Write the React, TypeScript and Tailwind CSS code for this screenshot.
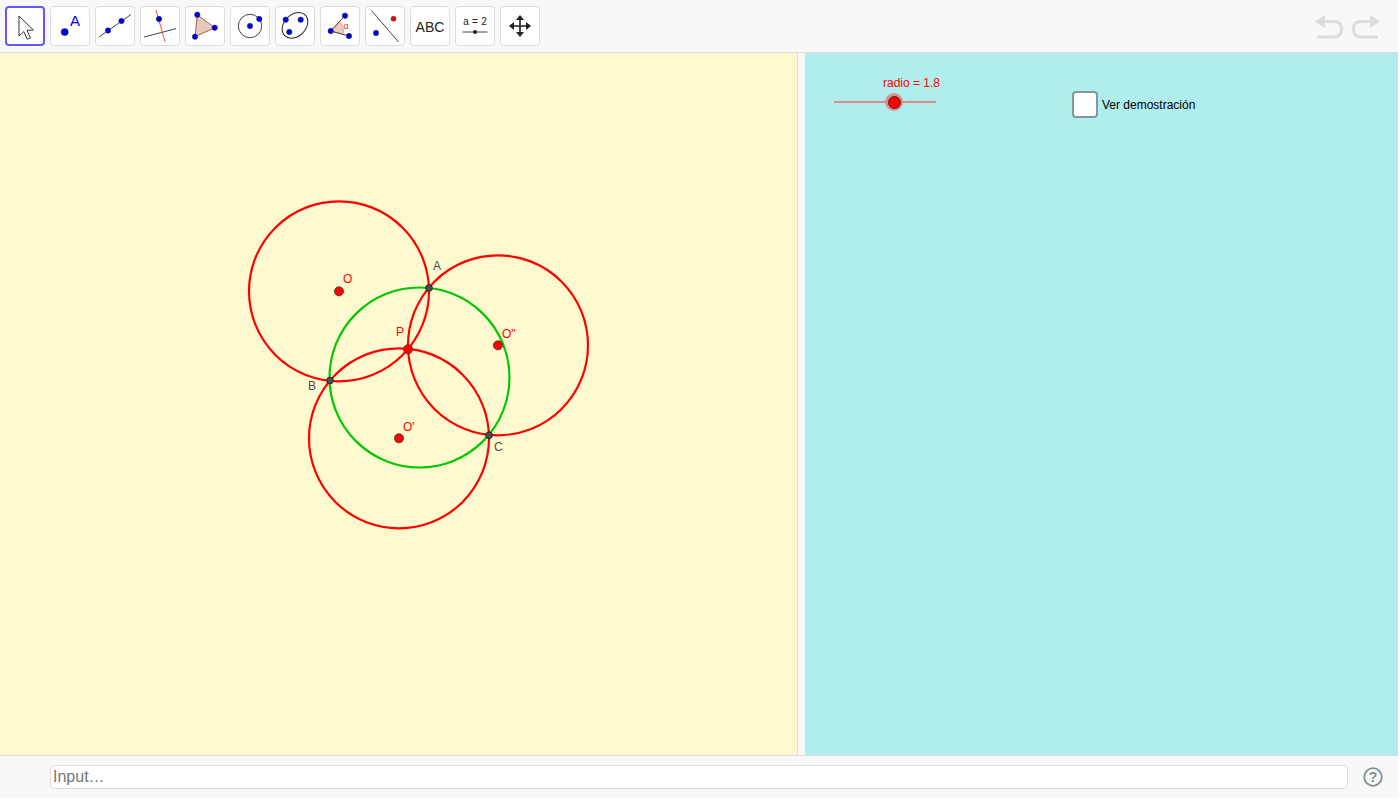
const Blue = ({ x, y, r = 2.7 }: { x: number; y: number; r?: number }) => (
  <circle cx={x} cy={y} r={r} fill="#0000e0" stroke="#1a1a4d" strokeWidth={0.5} />
);

const sans = { fontFamily: '"Liberation Sans", Arial, sans-serif' };

// all tool icons use a 40x40 box, same as the button
const tools = [
  <>
    <path
      d="M14 10 L14 30 L18.8 25.6 L22.2 33.2 L25.4 31.8 L22 24.4 L28.4 24 Z"
      fill="#fff"
      stroke="#333"
      strokeWidth={1}
      strokeLinejoin="round"
    />
  </>,
  <>
    <circle cx={14.7} cy={26} r={3.6} fill="#0000e0" stroke="#1a1a4d" strokeWidth={0.5} />
    <text x={20} y={20} fontSize={15} fill="#0000e0" style={sans}>
      A
    </text>
  </>,
  <>
    <line x1={4} y1={31} x2={36} y2={8.5} stroke="#444" strokeWidth={1} />
    <Blue x={13} y={24.5} />
    <Blue x={26.5} y={15} />
  </>,
  <>
    <line x1={4} y1={31} x2={36} y2={22.7} stroke="#444" strokeWidth={1} />
    <line x1={16} y1={4} x2={25} y2={35.7} stroke="#f0503c" strokeWidth={1} />
    <Blue x={19} y={13} />
  </>,
  <>
    <polygon
      points="12.3,8.7 29.7,21.7 10,30.7"
      fill="#e8cabd"
      stroke="#a0604c"
      strokeWidth={1}
    />
    <Blue x={12.3} y={8.7} />
    <Blue x={29.7} y={21.7} />
    <Blue x={10} y={30.7} />
  </>,
  <>
    <circle cx={20} cy={20} r={11.7} fill="none" stroke="#444" strokeWidth={1} />
    <Blue x={20} y={20} />
    <Blue x={29.3} y={13} />
  </>,
  <>
    <ellipse
      cx={20}
      cy={19.4}
      rx={14.5}
      ry={10.8}
      transform="rotate(-45 20 19.4)"
      fill="none"
      stroke="#222"
      strokeWidth={1}
    />
    <Blue x={10.7} y={13.7} />
    <Blue x={25.7} y={13.7} />
    <Blue x={14.3} y={26} />
  </>,
  <>
    <path d="M10.7 25 L19.5 15.6 A13 13 0 0 1 23 28.5 Z" fill="#eccabd" stroke="#e08a70" strokeWidth={0.6} />
    <polyline points="25,9.7 10.7,25 29,30" fill="none" stroke="#444" strokeWidth={1} />
    <Blue x={25} y={9.7} />
    <Blue x={10.7} y={25} />
    <Blue x={29} y={30} />
    <text x={23.5} y={22.5} fontSize={9} fill="#f03c28" style={sans}>
      α
    </text>
  </>,
  <>
    <line x1={6.5} y1={4.5} x2={33.5} y2={36} stroke="#444" strokeWidth={1} />
    <circle cx={28.5} cy={12.7} r={2.5} fill="#f00000" stroke="#401a1a" strokeWidth={0.5} />
    <Blue x={11} y={27} />
  </>,
  <>
    <text x={20} y={25.5} fontSize={14} textAnchor="middle" fill="#222" style={sans}>
      ABC
    </text>
  </>,
  <>
    <text x={20} y={18.5} fontSize={10} textAnchor="middle" fill="#222" style={sans} wordSpacing={0.5}>
      a = 2
    </text>
    <line x1={7.5} y1={26} x2={32.5} y2={26} stroke="#444" strokeWidth={1} />
    <circle cx={20} cy={26} r={2} fill="#222" />
  </>,
  <>
    <path d="M20 10 V30 M10 20 H30" stroke="#222" strokeWidth={1.6} fill="none" />
    <path
      d="M20 9 L16 14 H24 Z M20 31 L16 26 H24 Z M9 20 L14 16 V24 Z M31 20 L26 16 V24 Z"
      fill="#222"
    />
  </>,
];

const circles = [
  { x: 339, y: 291.3 },
  { x: 399, y: 438.3 },
  { x: 498, y: 345.3 },
];

const redPoints = [
  { x: 339, y: 291.3, label: "O", lx: 343, ly: 283 },
  { x: 399, y: 438.3, label: "O'", lx: 403, ly: 431 },
  { x: 498, y: 345.3, label: 'O"', lx: 502, ly: 338 },
  { x: 408, y: 349.3, label: "P", lx: 396, ly: 336 },
];

const darkPoints = [
  { x: 429, y: 288, label: "A", lx: 433, ly: 270 },
  { x: 330, y: 380.5, label: "B", lx: 308, ly: 390 },
  { x: 489, y: 435.3, label: "C", lx: 494, ly: 451 },
];

export default function App() {
  return (
    <div className="w-[1398px] h-[798px] flex flex-col overflow-hidden bg-[#f8f8f8] font-['Liberation_Sans',Arial,sans-serif]">
      <div className="h-[53px] shrink-0 flex items-start justify-between border-b border-[#dcdcdc] pl-[5px] pt-[6px] pr-[18px]">
        <div className="flex gap-[5px]">
          {tools.map((icon, i) => (
            <button
              key={i}
              className={
                i === 0
                  ? "w-10 h-10 bg-white rounded-[4px] border-2 border-[#6557ff]"
                  : "w-10 h-10 bg-white rounded-[4px] border border-[#dcdcdc]"
              }
            >
              <svg viewBox="0 0 40 40" className={i === 0 ? "w-10 h-10 -m-[2px]" : "w-10 h-10 -m-px"}>
                {icon}
              </svg>
            </button>
          ))}
        </div>
        <div className="flex gap-[9px] mt-[8px]">
          <svg width="28" height="26" viewBox="0 0 28 26" fill="none">
            <path d="M10 1 L0 7.5 L10 14 Z" fill="#dcdcdc" />
            <path
              d="M8 7.5 H19 C24 7.5 26.5 10.5 26.5 15 C26.5 20 24 23 19 23 H2"
              stroke="#dcdcdc"
              strokeWidth={3}
            />
          </svg>
          <svg width="28" height="26" viewBox="0 0 28 26" fill="none">
            <path d="M18 1 L28 7.5 L18 14 Z" fill="#dcdcdc" />
            <path
              d="M20 7.5 H9 C4 7.5 1.5 10.5 1.5 15 C1.5 20 4 23 9 23 H26"
              stroke="#dcdcdc"
              strokeWidth={3}
            />
          </svg>
        </div>
      </div>

      <div className="flex flex-1 min-h-0">
        <div className="w-[797px] bg-[#fff9cf]">
          <svg viewBox="0 53 797 702" className="w-[797px] h-[702px] block">
            <circle cx={419.5} cy={377.5} r={90} fill="none" stroke="#00c800" strokeWidth={2.2} />
            {circles.map((c) => (
              <circle key={c.x} cx={c.x} cy={c.y} r={90} fill="none" stroke="#ff0000" strokeWidth={2.2} />
            ))}
            {redPoints.map((p) => (
              <g key={p.label}>
                <circle cx={p.x} cy={p.y} r={4.6} fill="#ff0000" stroke="#333" strokeWidth={0.7} />
                <text x={p.lx} y={p.ly} fontSize={12} fill="#ff0000" style={sans}>
                  {p.label}
                </text>
              </g>
            ))}
            {darkPoints.map((p) => (
              <g key={p.label}>
                <circle cx={p.x} cy={p.y} r={3.4} fill="#4d4d4d" stroke="#1a1a1a" strokeWidth={0.8} />
                <text x={p.lx} y={p.ly} fontSize={12} fill="#4d4d4d" style={sans}>
                  {p.label}
                </text>
              </g>
            ))}
          </svg>
        </div>
        <div className="w-2 bg-[#f8f8f8] border-l border-[#dcdcdc]" />
        <div className="flex-1 bg-[#b0eeee] flex items-start pl-[29px] pt-[24px]">
          <div className="w-[102px]">
            <div className="text-[12px] leading-[13px] text-[#ff0000] whitespace-nowrap pl-[49px]">
              radio = 1.8
            </div>
            <div className="relative h-[2px] mt-[11px] bg-[#e08c8c]">
              <div className="absolute left-[51px] -top-[8px] w-[18px] h-[18px] rounded-full bg-[#e08c8c] flex items-center justify-center">
                <div className="w-[13px] h-[13px] rounded-full bg-[#ff0000] border border-[#333]" />
              </div>
            </div>
          </div>
          <div className="flex items-center ml-[136px] mt-[14px] gap-1">
            <div className="w-[26px] h-[27px] bg-white rounded-[4px] border-2 border-[#7f9a9a]" />
            <span className="text-[12px] text-black whitespace-nowrap pt-[1px]">Ver demostración</span>
          </div>
        </div>
      </div>

      <div className="h-[43px] shrink-0 flex items-center border-t border-[#dcdcdc] pl-[50px] pr-[15px]">
        <input
          placeholder="Input…"
          className="flex-1 h-6 bg-white rounded-[4px] border border-[#dcdcdc] px-[2px] text-base outline-none placeholder:text-[#757575]"
        />
        <svg width="20" height="20" viewBox="0 0 20 20" className="ml-[15px]">
          <circle cx={10} cy={10} r={8.8} fill="none" stroke="#7d8f8f" strokeWidth={1.8} />
          <text x={10} y={15} fontSize={14} fontWeight={700} textAnchor="middle" fill="#7d8f8f" style={sans}>
            ?
          </text>
        </svg>
      </div>
    </div>
  );
}
